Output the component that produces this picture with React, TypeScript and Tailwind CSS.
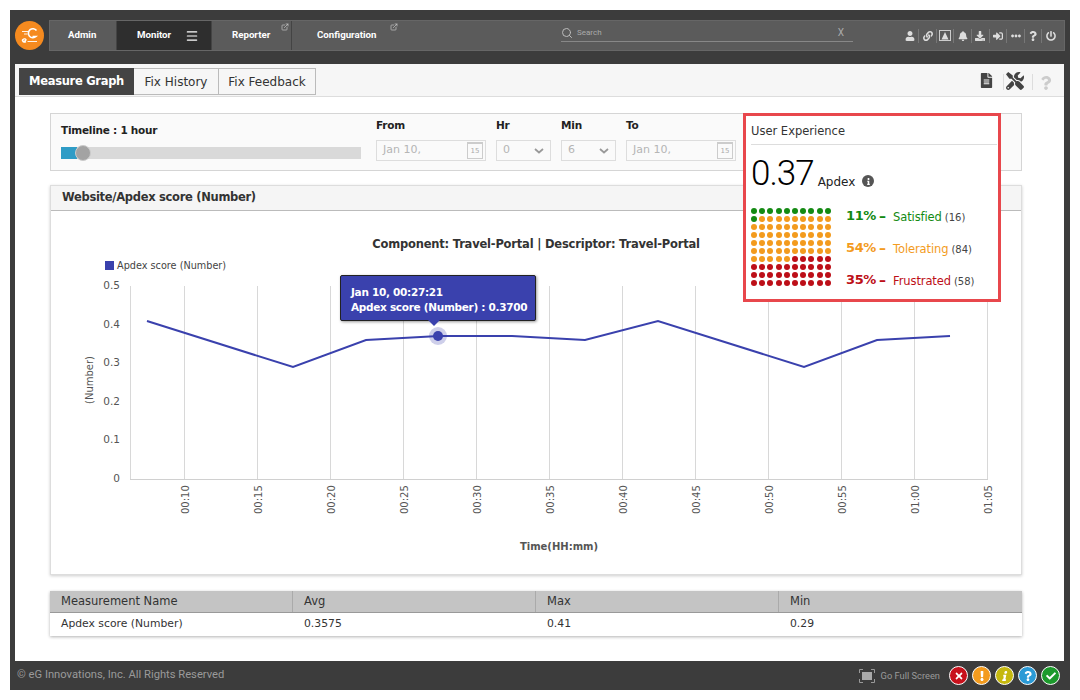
import { FaBell, FaCheck, FaDownload, FaEllipsisH, FaExclamation, FaFileAlt, FaInfo, FaLink, FaPowerOff, FaQuestion, FaSignInAlt, FaTimes, FaTools, FaUser } from 'react-icons/fa'
import { ExternalLink, Menu, Search } from 'lucide-react'
import type { ReactNode } from 'react'

const lucida = { fontFamily: '"DejaVu Sans", sans-serif' }

const points = [
  [147, 321], [293, 367], [366, 340], [439, 336], [512, 336], [585, 340], [658, 321], [804, 367], [877, 340], [950, 336],
]
const gridX = [184.5, 257.5, 330.5, 403.5, 476.5, 549.5, 622.5, 695.5, 768.5, 841.5, 914.5, 987.5]
const gridLabels = ['00:10', '00:15', '00:20', '00:25', '00:30', '00:35', '00:40', '00:45', '00:50', '00:55', '01:00', '01:05']
const yTicks = [
  ['0.5', 285], ['0.4', 324], ['0.3', 362], ['0.2', 401], ['0.1', 439], ['0', 478],
] as const

function dotColor(i: number) {
  if (i < 11) return 'bg-[#138a12]'
  if (i < 65) return 'bg-[#f39b1e]'
  return 'bg-[#bd0f18]'
}

function NavTab({ children, width, active, ext, last }: { children: ReactNode; width: string; active?: boolean; ext?: boolean; last?: boolean }) {
  return (
    <div className={`relative flex h-[29px] items-center text-[9.7px] font-bold text-white ${last ? '' : 'border-r border-[#444]'} ${width} ${active ? 'bg-[#2e2e2e]' : 'bg-[#5b5b5b]'}`}>
      {children}
      {ext && <ExternalLink size={8} className="absolute top-[2px] right-[2px] text-[#ccc]" />}
    </div>
  )
}

function Field({ label, width, value, kind }: { label: string; width: string; value: string; kind: 'date' | 'select' }) {
  return (
    <div className={width}>
      <div className="mb-[8px] text-[10.5px] leading-[14px] font-bold tracking-[-0.2px] text-[#222]">{label}</div>
      <div className="flex h-[21px] items-center justify-between border border-[#ddd] pr-[2px] pl-[6px] text-[11px] text-[#b5b5b5]">
        {value}
        {kind === 'date' ? (
          <span className="flex h-[17px] w-[16px] items-center justify-center border border-t-2 border-[#ccc] text-[7px] leading-none text-[#aaa]">15</span>
        ) : (
          <svg width="10" height="6" viewBox="0 0 10 6" className="mr-[4px]"><path d="M1 1l4 3.5L9 1" stroke="#999" strokeWidth="1.8" fill="none" /></svg>
        )}
      </div>
    </div>
  )
}

function Status({ bg, children }: { bg: string; children: ReactNode }) {
  return <div className={`flex h-[19px] w-[19px] items-center justify-center rounded-full border border-white text-[10px] text-white ${bg}`}>{children}</div>
}

function LegendRow({ pct, name, count, color }: { pct: string; name: string; count: string; color: string }) {
  return (
    <div className={`flex h-[32px] items-center ${color}`}>
      <span className="w-[33px] text-[13px] font-bold tracking-[-0.4px]">{pct}</span>
      <span className="w-[14px] text-[14px] font-bold">–</span>
      <span className="mt-[3px] text-[11.5px] tracking-[-0.1px]">{name}</span>
      <span className="mt-[3px] ml-[3px] text-[10px] text-[#444]">{count}</span>
    </div>
  )
}

function TopIcon({ children }: { children: ReactNode }) {
  return <div className="flex h-[14px] w-[17.6px] items-center justify-center border-r border-[#777] text-[10px] text-[#ddd] last:border-r-0">{children}</div>
}

export default function App() {
  return (
    <div className="h-[700px] w-[1080px] overflow-hidden bg-white pt-[10px] pl-[10px]" style={lucida}>
      <div className="relative flex h-[680px] w-[1060px] flex-col bg-[#3c3c3c]">
        {/* Top nav */}
        <div className="flex h-[54px] shrink-0 items-start pt-[10px] pr-[5px] pl-[5px]">
          <svg width="29" height="29" viewBox="0 0 29 29" className="mt-[1px] shrink-0">
            <circle cx="14.5" cy="14.5" r="14.5" fill="#f58a1f" />
            <path d="M21.5 9.500a4.500 4.500 0 1 0 -.5 6h-3.500" stroke="#fff" strokeWidth="1.600" fill="none" />
            <path d="M7 19.500c1-1.800 3.400-2.300 4-.9.400 1-1.700 1.700-3.300 1.500.3 1.300 2 1.300 3.300.6" stroke="#fff" strokeWidth="1.300" fill="none" />
            <path d="M7 10.500h6M9 13h3.500M12.500 20.500h9.500" stroke="#fff" strokeWidth="0.900" fill="none" />
          </svg>
          <div className="ml-[5px] flex h-[31px] flex-1 border border-[#666] bg-[#5b5b5b]" style={{ fontFamily: 'Roboto, sans-serif' }}>
            <NavTab width="w-[67px]"><span className="ml-[18px]">Admin</span></NavTab>
            <NavTab width="w-[95px]" active>
              <span className="ml-[20px]">Monitor</span>
              <Menu size={14} className="ml-[14px]" />
            </NavTab>
            <NavTab width="w-[80px]" ext><span className="ml-[20px]">Reporter</span></NavTab>
            <NavTab width="w-[108px]" last ext><span className="ml-[25px]">Configuration</span></NavTab>
            <div className="mt-[3px] ml-[161px] flex h-[18px] w-[292px] items-center border-b border-[#888] text-[8px] text-[#aaa]">
              <Search size={12} className="text-[#bbb]" />
              <span className="ml-[4px] flex-1">Search</span>
              <span className="mr-[9px] text-[10px]">X</span>
            </div>
            <div className="ml-auto flex h-[29px] items-center pr-[4px]">
              <TopIcon><FaUser /></TopIcon>
              <TopIcon><FaLink /></TopIcon>
              <TopIcon><svg width="12" height="11" viewBox="0 0 12 11"><rect x="0.5" y="0.5" width="11" height="10" fill="none" stroke="#ccc" /><path d="M6 2l3.500 7.500h-7z" fill="#ddd" /></svg></TopIcon>
              <TopIcon><FaBell /></TopIcon>
              <TopIcon><FaDownload /></TopIcon>
              <TopIcon><FaSignInAlt /></TopIcon>
              <TopIcon><FaEllipsisH /></TopIcon>
              <TopIcon><FaQuestion /></TopIcon>
              <TopIcon><FaPowerOff /></TopIcon>
            </div>
          </div>
        </div>

        {/* Content */}
        <div className="ml-[5px] flex h-[597px] w-[1049px] shrink-0 flex-col bg-white">
          <div className="flex h-[33px] shrink-0 items-center border-b border-[#ddd] bg-[#f6f6f6] pt-[3px] pl-[4px] text-[12px] text-[#333]">
            <div className="flex h-[27px] w-[115px] items-center justify-center bg-[#444] text-[11.5px] font-bold tracking-[-0.3px] text-white">Measure Graph</div>
            <div className="flex h-[27px] w-[85px] items-center justify-center border border-l-0 border-[#bbb]">Fix History</div>
            <div className="flex h-[27px] w-[97px] items-center justify-center border border-l-0 border-[#bbb]">Fix Feedback</div>
            <div className="ml-auto flex items-center pr-[11px] text-[#444]">
              <FaFileAlt size={15} className="mb-[2px]" />
              <div className="mr-[2px] ml-[9px] h-[16px] w-px bg-[#ddd]" />
              <FaTools size={18} className="mb-[1px]" />
              <div className="mr-[6px] ml-[8px] h-[16px] w-px bg-[#ddd]" />
              <FaQuestion size={14} className="mt-[3px] text-[#ccc]" />
            </div>
          </div>

          <div className="flex flex-col px-[35px] pt-[16px]">
            {/* Timeline */}
            <div className="flex h-[58px] w-[972px] border border-[#d5d5d5] bg-[#fafafa]">
              <div className="w-[325px] pt-[9px] pl-[10px]">
                <div className="text-[10.5px] leading-[14px] font-bold tracking-[-0.25px] text-[#222]">Timeline : 1 hour</div>
                <div className="relative mt-[10px] h-[12px] w-[300px] bg-[#d9d9d9]">
                  <div className="h-full w-[16px] bg-[#2f9cc6]" />
                  <div className="absolute top-[-2px] left-[14px] h-[16px] w-[16px] rounded-full border border-[#ccc] bg-[#a3a3a3]" />
                </div>
              </div>
              <div className="flex gap-[10px] pt-[4px]">
                <Field label="From" width="w-[110px]" value="Jan 10," kind="date" />
                <Field label="Hr" width="w-[55px]" value="0" kind="select" />
                <Field label="Min" width="w-[55px]" value="6" kind="select" />
                <Field label="To" width="w-[110px]" value="Jan 10," kind="date" />
              </div>
            </div>

            {/* Chart */}
            <div className="relative mt-[14px] h-[390px] w-[972px] border border-[#ddd] shadow-[0_1px_3px_rgba(0,0,0,0.2)]">
              <div className="flex h-[25px] items-center border-b border-[#bbb] bg-[#f5f5f5] pl-[11px] text-[11.5px] font-bold tracking-[-0.3px] text-[#333]">Website/Apdex score (Number)</div>
              <div className="mt-[25px] text-center text-[11.5px] font-bold tracking-[-0.2px] text-[#333]">Component: Travel-Portal | Descriptor: Travel-Portal</div>
              <svg className="absolute top-0 left-0" width="972" height="390" viewBox="51 186 972 390">
                <rect x="105" y="261" width="9" height="9" fill="#3a41ad" />
                <text x="117" y="269" fontSize="9.7" fill="#444">Apdex score (Number)</text>
                {gridX.map((x, i) => (
                  <g key={x}>
                    <line x1={x} y1="286" x2={x} y2="479" stroke="#d8d8d8" />
                    <text transform={`translate(${x + 4} 514) rotate(-90)`} fontSize="10" fill="#555">{gridLabels[i]}</text>
                  </g>
                ))}
                <line x1="130.5" y1="286" x2="130.5" y2="479" stroke="#d8d8d8" />
                <line x1="130" y1="479.5" x2="988" y2="479.5" stroke="#d0d0d0" />
                {yTicks.map(([t, y]) => (
                  <text key={t} x="120" y={y + 4} textAnchor="end" fontSize="10.5" fill="#555">{t}</text>
                ))}
                <text transform="translate(93 380) rotate(-90)" textAnchor="middle" fontSize="10" fill="#555">(Number)</text>
                <text x="559" y="550" textAnchor="middle" fontSize="10" fontWeight="bold" fill="#555">Time(HH:mm)</text>
                <polyline points={points.map((p) => p.join(',')).join(' ')} fill="none" stroke="#3a41ad" strokeWidth="2" />
                <circle cx="438" cy="336" r="9" fill="#3a41ad" opacity="0.25" />
                <circle cx="438" cy="336" r="5" fill="#3a41ad" />
              </svg>
              {/* Tooltip */}
              <div className="absolute top-[89px] left-[289px] h-[46px] w-[196px] rounded-[2px] border border-[#222] bg-[#3a41ad] pt-[9px] pl-[10px] text-[10.5px] leading-[15px] font-bold tracking-[-0.3px] text-white shadow-[1px_1px_3px_rgba(0,0,0,0.4)]">
                <div>Jan 10, 00:27:21</div>
                <div className="whitespace-nowrap">Apdex score (Number) : 0.3700</div>
                <div className="absolute top-[44px] left-[87px] h-0 w-0 border-x-[6px] border-t-[6px] border-x-transparent border-t-[#3a41ad]" />
              </div>
            </div>

            {/* Table */}
            <div className="mt-[16px] w-[972px] text-[10.8px] text-[#333] shadow-[0_1px_3px_rgba(0,0,0,0.3)]">
              <div className="grid h-[22px] grid-cols-[243px_243px_243px_243px] items-center border-b border-[#999] bg-[#c4c4c4] text-[11.5px]">
                <div className="flex h-full items-center border-r border-[#aaa] pl-[11px]">Measurement Name</div>
                <div className="flex h-full items-center border-r border-[#aaa] pl-[11px]">Avg</div>
                <div className="flex h-full items-center border-r border-[#aaa] pl-[11px]">Max</div>
                <div className="flex h-full items-center pl-[11px]">Min</div>
              </div>
              <div className="grid h-[23px] grid-cols-[243px_243px_243px_243px] items-center bg-white">
                <div className="pl-[11px]">Apdex score (Number)</div>
                <div className="pl-[11px]">0.3575</div>
                <div className="pl-[11px]">0.41</div>
                <div className="pl-[11px]">0.29</div>
              </div>
            </div>
          </div>
        </div>

        {/* Footer */}
        <div className="flex h-[29px] items-center pr-[10px] pl-[7px] text-[9.3px] text-[#9a9a9a]" style={{ fontFamily: 'Roboto, sans-serif' }}>
          <span className="text-[11.2px]">© eG Innovations, Inc. All Rights Reserved</span>
          <div className="ml-auto flex items-center">
            <svg width="16" height="14" viewBox="0 0 16 14" className="mr-[6px]">
              <path d="M.5 4V.5H4M12 .5h3.500V4M.5 10v3.500H4M12 13.500h3.500V10" stroke="#999" fill="none" />
              <rect x="3" y="3" width="10" height="8" fill="#aaa" />
            </svg>
            <span className="mr-[9px]">Go Full Screen</span>
            <div className="flex gap-[4px]">
              <Status bg="bg-[#c8111c]"><FaTimes /></Status>
              <Status bg="bg-[#f39b1e]"><FaExclamation /></Status>
              <Status bg="bg-[#c5b80f]"><FaInfo className="-skew-x-12" /></Status>
              <Status bg="bg-[#2b9ad6]"><FaQuestion /></Status>
              <Status bg="bg-[#1c9a2c]"><FaCheck /></Status>
            </div>
          </div>
        </div>

        {/* User experience callout */}
        <div className="absolute top-[103px] left-[733px] h-[189px] w-[258px] border-[3px] border-[#e8474c] bg-white pr-px pl-[5px]">
          <div className="flex h-[29px] items-center border-b border-[#ddd] pt-[3px] text-[11.5px] text-[#333]">User Experience</div>
          <div className="flex h-[47px] items-end">
            <span className="mb-[-2px] text-[35px] leading-[40px] font-light tracking-[-1px] text-black" style={{ fontFamily: 'Roboto, sans-serif' }}>0.37</span>
            <span className="mb-[1px] ml-[4px] text-[12px] text-[#222]">Apdex</span>
            <span className="mb-[5px] ml-[7px] flex h-[12px] w-[12px] items-center justify-center rounded-full bg-[#555] text-[7px] text-white"><FaInfo /></span>
          </div>
          <div className="mt-[8px] flex items-start">
            <div className="mt-[8px] grid w-[80px] grid-cols-10 gap-[2px]">
              {Array.from({ length: 100 }, (_, i) => (
                <div key={i} className={`h-[6px] w-[6px] rounded-full ${dotColor(i)}`} />
              ))}
            </div>
            <div className="ml-[15px]">
              <LegendRow pct="11%" name="Satisfied" count="(16)" color="text-[#138a12]" />
              <LegendRow pct="54%" name="Tolerating" count="(84)" color="text-[#f39b1e]" />
              <LegendRow pct="35%" name="Frustrated" count="(58)" color="text-[#bd0f18]" />
            </div>
          </div>
        </div>
      </div>
    </div>
  )
}
